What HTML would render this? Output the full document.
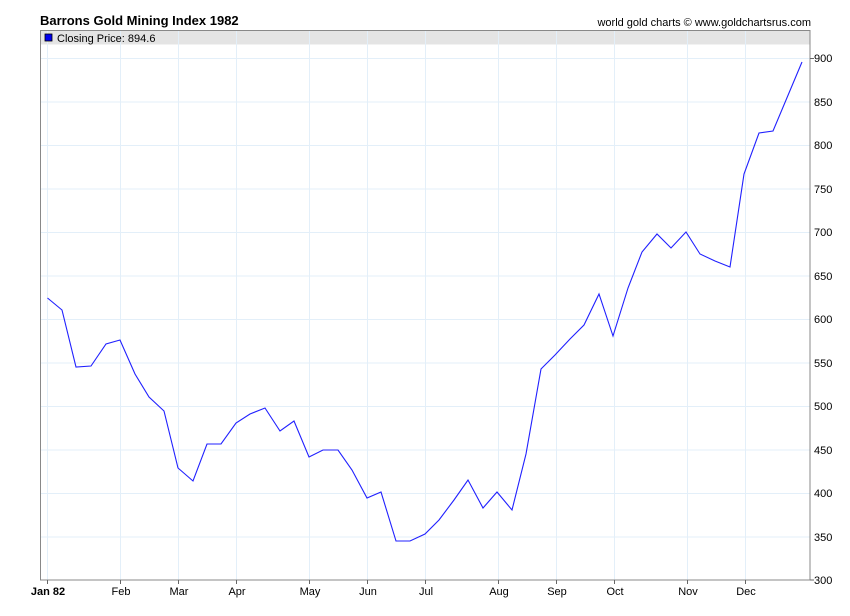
<!DOCTYPE html>
<html><head><style>
html,body{margin:0;padding:0;background:#fff;width:850px;height:616px;overflow:hidden}
svg text{font-family:"Liberation Sans",Arial,sans-serif}
</style></head><body>
<svg width="850" height="616" xmlns="http://www.w3.org/2000/svg">
<text x="40" y="25" font-size="13" font-weight="bold" fill="#000">Barrons Gold Mining Index 1982</text>
<text x="811" y="26" font-size="11" fill="#000" text-anchor="end">world gold charts © www.goldchartsrus.com</text>
<rect x="40.5" y="30.5" width="769.5" height="14" fill="#e4e4e4"/>
<g stroke="#e3eff9" stroke-width="1">
<line x1="41" y1="58.5" x2="810" y2="58.5"/><line x1="41" y1="102" x2="810" y2="102"/><line x1="41" y1="145.5" x2="810" y2="145.5"/><line x1="41" y1="189" x2="810" y2="189"/><line x1="41" y1="232.5" x2="810" y2="232.5"/><line x1="41" y1="276" x2="810" y2="276"/><line x1="41" y1="319.5" x2="810" y2="319.5"/><line x1="41" y1="363" x2="810" y2="363"/><line x1="41" y1="406.5" x2="810" y2="406.5"/><line x1="41" y1="450" x2="810" y2="450"/><line x1="41" y1="493.5" x2="810" y2="493.5"/><line x1="41" y1="537" x2="810" y2="537"/>
<line x1="47.5" y1="31" x2="47.5" y2="580"/><line x1="120.5" y1="31" x2="120.5" y2="580"/><line x1="178.5" y1="31" x2="178.5" y2="580"/><line x1="236.5" y1="31" x2="236.5" y2="580"/><line x1="309.5" y1="31" x2="309.5" y2="580"/><line x1="367.5" y1="31" x2="367.5" y2="580"/><line x1="425.5" y1="31" x2="425.5" y2="580"/><line x1="498.5" y1="31" x2="498.5" y2="580"/><line x1="556.5" y1="31" x2="556.5" y2="580"/><line x1="614.5" y1="31" x2="614.5" y2="580"/><line x1="687.5" y1="31" x2="687.5" y2="580"/><line x1="745.5" y1="31" x2="745.5" y2="580"/>
</g>
<rect x="40.5" y="30.5" width="769.5" height="549.5" fill="none" stroke="#888" stroke-width="1"/>
<rect x="45" y="34" width="7" height="7" fill="#0000ee" stroke="#000" stroke-width="0.8"/>
<text x="57" y="42" font-size="11" fill="#000">Closing Price: 894.6</text>
<g stroke="#666"><line x1="810" y1="58.5" x2="814" y2="58.5"/><line x1="810" y1="580" x2="814" y2="580"/>
<line x1="47.5" y1="580" x2="47.5" y2="584"/><line x1="120.5" y1="580" x2="120.5" y2="584"/><line x1="178.5" y1="580" x2="178.5" y2="584"/><line x1="236.5" y1="580" x2="236.5" y2="584"/><line x1="309.5" y1="580" x2="309.5" y2="584"/><line x1="367.5" y1="580" x2="367.5" y2="584"/><line x1="425.5" y1="580" x2="425.5" y2="584"/><line x1="498.5" y1="580" x2="498.5" y2="584"/><line x1="556.5" y1="580" x2="556.5" y2="584"/><line x1="614.5" y1="580" x2="614.5" y2="584"/><line x1="687.5" y1="580" x2="687.5" y2="584"/><line x1="745.5" y1="580" x2="745.5" y2="584"/></g>
<g font-size="11" fill="#000">
<text x="814" y="62">900</text><text x="814" y="106">850</text><text x="814" y="149">800</text><text x="814" y="193">750</text><text x="814" y="236">700</text><text x="814" y="280">650</text><text x="814" y="323">600</text><text x="814" y="367">550</text><text x="814" y="410">500</text><text x="814" y="454">450</text><text x="814" y="497">400</text><text x="814" y="541">350</text><text x="814" y="584">300</text>
</g>
<g font-size="11" fill="#000" text-anchor="middle">
<text x="48" y="595" font-weight="bold">Jan 82</text><text x="121" y="595">Feb</text><text x="179" y="595">Mar</text><text x="237" y="595">Apr</text><text x="310" y="595">May</text><text x="368" y="595">Jun</text><text x="426" y="595">Jul</text><text x="499" y="595">Aug</text><text x="557" y="595">Sep</text><text x="615" y="595">Oct</text><text x="688" y="595">Nov</text><text x="746" y="595">Dec</text>
</g>
<polyline fill="none" stroke="#2020ff" stroke-width="1.1" points="47.5,298 62,310 76,367 91,366 106,344 120,340 135,374 149,397 164,411 178,468 193,481 207,444 221,444 236,423 250,414 265,408 280,431 294,421 309,457 323,450 338,450 352,470 367,498 381,492 396,541 410,541 425,534 439,520 454,500 468,480 483,508 497,492 512,510 526,454 541,369 555,355 570,339 584,325 599,294 613,336 628,288 642,252 657,234 671,248 686,232 700,254 715,261 730,267 744,174 759,133 773,131 802,62"/>
</svg>
</body></html>
